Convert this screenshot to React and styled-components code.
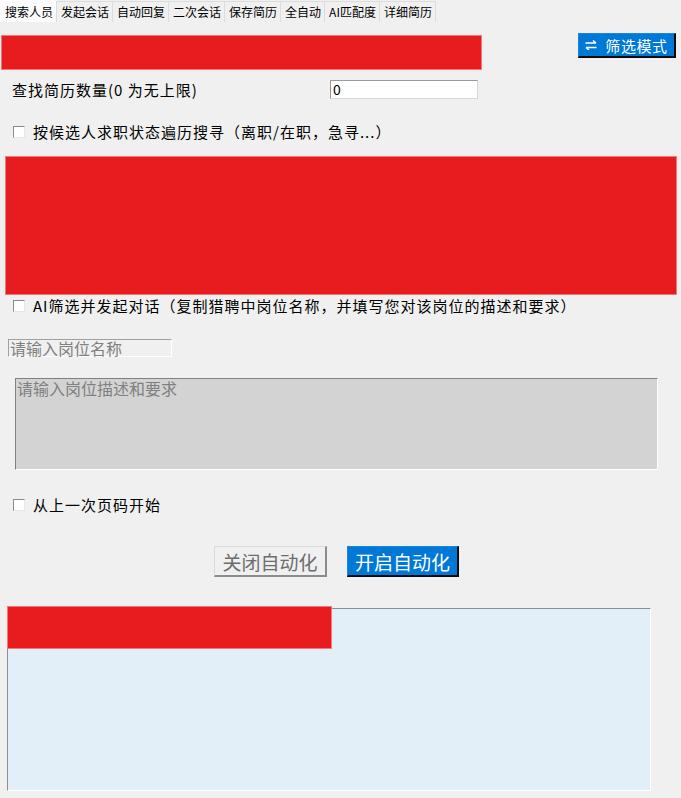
import React from "react";
import styled, { createGlobalStyle } from "styled-components";

const Global = createGlobalStyle`
  html, body { margin: 0; padding: 0; background: #f0f0f0; }
  * { box-sizing: border-box; }
`;

const FONT = `"Noto Sans CJK SC", "Noto Sans", sans-serif`;

const Page = styled.div`
  width: 681px;
  height: 798px;
  overflow: hidden;
  background: #f0f0f0;
  font-family: ${FONT};
  color: #000;
  display: flex;
  flex-direction: column;
`;

const TabBar = styled.div`
  display: flex;
  align-items: flex-end;
  height: 22px;
  background: #f0f0f0;
`;

const Tab = styled.div`
  height: ${(p) => (p.$active ? "22px" : "21px")};
  padding: 0 3px 0 4px;
  display: flex;
  align-items: center;
  font-size: 12px;
  line-height: 1;
  white-space: nowrap;
  background: ${(p) => (p.$active ? "#fcfcfc" : "#f0f0f0")};
  border: 1px solid ${(p) => (p.$active ? "#fcfcfc" : "#dcdcdc")};
  border-bottom: none;
  margin-left: ${(p) => (p.$active ? "0" : "-1px")};
`;

const TopRow = styled.div`
  margin-top: 11px;
  height: 37px;
  display: flex;
  justify-content: space-between;
  align-items: flex-start;
  padding: 0 5px 0 1px;
`;

const RedBlock = styled.div`
  background: #e81c1e;
  border: 1px solid #f07a7a;
  width: ${(p) => p.$w}px;
  height: ${(p) => p.$h}px;
  margin-top: ${(p) => p.$mt || 0}px;
  margin-left: ${(p) => p.$ml || 0}px;
`;

const BlueButton = styled.button`
  font-family: ${FONT};
  width: ${(p) => p.$w}px;
  height: ${(p) => p.$h}px;
  background: #0078d7;
  color: #fff;
  font-size: ${(p) => p.$fs}px;
  letter-spacing: ${(p) => p.$ls || 0}px;
  border: 1px solid #1a86dc;
  border-right: 2px solid #0a0a0a;
  border-bottom: 2px solid #0a0a0a;
  padding: 0;
  display: flex;
  align-items: center;
  justify-content: center;
  gap: 8px;
  line-height: 1;
`;

const GrayButton = styled.button`
  font-family: ${FONT};
  width: 113px;
  height: 31px;
  background: #f0f0f0;
  color: #6d6d6d;
  font-size: 19px;
  border: 1px solid #dadada;
  border-right: 2px solid #8c8c8c;
  border-bottom: 2px solid #8c8c8c;
  padding: 0;
  line-height: 1;
`;

const CountRow = styled.div`
  margin-top: 10px;
  height: 19px;
  display: flex;
  align-items: center;
  padding-left: 12px;
`;

const Label = styled.span`
  font-size: 15px;
  letter-spacing: 1px;
  line-height: 20px;
  white-space: nowrap;
  width: ${(p) => (p.$w ? `${p.$w}px` : "auto")};
`;

const NumberInput = styled.div`
  width: 148px;
  height: 19px;
  background: #fff;
  border: 1px solid #d8d8d8;
  border-top-color: #9a9a9a;
  border-left-color: #9a9a9a;
  font-size: 14px;
  line-height: 17px;
  padding-left: 2px;
`;

const CheckRow = styled.label`
  margin-top: ${(p) => p.$mt}px;
  height: 20px;
  display: flex;
  align-items: center;
  gap: 8px;
  padding-left: 13px;
`;

const Box = styled.span`
  width: 12px;
  height: 12px;
  background: #fff;
  border: 1px solid #e6e6e6;
  border-top-color: #8a8a8a;
  border-left-color: #8a8a8a;
  flex: none;
`;

const NameInput = styled.div`
  margin: 23px 0 0 8px;
  width: 164px;
  height: 18px;
  border: 1px solid #fff;
  border-top-color: #a0a0a0;
  border-left-color: #a0a0a0;
  color: #808080;
  font-size: 16px;
  line-height: 16px;
  padding-left: 1px;
  white-space: nowrap;
`;

const TextArea = styled.div`
  margin: 21px 0 0 15px;
  width: 643px;
  height: 92px;
  background: #d3d3d3;
  border: 1px solid #fff;
  border-top-color: #808080;
  border-left-color: #808080;
  color: #808080;
  font-size: 16px;
  line-height: 18px;
  padding: 0 1px;
`;

const ButtonRow = styled.div`
  margin-top: 31px;
  display: flex;
  justify-content: center;
  gap: 20px;
  padding-right: 8px;
`;

const LogPanel = styled.div`
  position: relative;
  margin: 31px 0 0 7px;
  width: 644px;
  height: 183px;
  background: #e2eff9;
  border: 1px solid #fff;
  border-top-color: #8a9098;
  border-left-color: #8a9098;
`;

const Redaction = styled(RedBlock)`
  position: absolute;
  top: -3px;
  left: -1px;
`;

const SwapIcon = () => (
  <svg width="12" height="10" viewBox="0 0 12 10" fill="none" stroke="#fff" strokeWidth="1.4">
    <path d="M0.5 3 H11 M8 0.5 L11 3" />
    <path d="M11.5 7.5 H1 M4 10 L1 7.5" />
  </svg>
);

const tabs = ["搜索人员", "发起会话", "自动回复", "二次会话", "保存简历", "全自动", "AI匹配度", "详细简历"];

export default function App() {
  return (
    <Page>
      <Global />
      <TabBar>
        {tabs.map((t, i) => (
          <Tab key={t} $active={i === 0}>
            {t}
          </Tab>
        ))}
      </TabBar>

      <TopRow>
        <RedBlock $w={481} $h={35} $mt={2} />
        <BlueButton $w={98} $h={25} $fs={15} $ls={0.6}>
          <SwapIcon />
          <span>筛选模式</span>
        </BlueButton>
      </TopRow>

      <CountRow>
        <Label $w={318}>查找简历数量(0 为无上限)</Label>
        <NumberInput>0</NumberInput>
      </CountRow>

      <CheckRow $mt={23}>
        <Box />
        <Label>按候选人求职状态遍历搜寻（离职/在职，急寻...）</Label>
      </CheckRow>

      <RedBlock $w={672} $h={139} $mt={14} $ml={5} />

      <CheckRow $mt={1}>
        <Box />
        <Label>AI筛选并发起对话（复制猎聘中岗位名称，并填写您对该岗位的描述和要求）</Label>
      </CheckRow>

      <NameInput>请输入岗位名称</NameInput>
      <TextArea>请输入岗位描述和要求</TextArea>

      <CheckRow $mt={25}>
        <Box />
        <Label>从上一次页码开始</Label>
      </CheckRow>

      <ButtonRow>
        <GrayButton>关闭自动化</GrayButton>
        <BlueButton $w={112} $h={31} $fs={19}>
          开启自动化
        </BlueButton>
      </ButtonRow>

      <LogPanel>
        <Redaction $w={325} $h={43} />
      </LogPanel>
    </Page>
  );
}
